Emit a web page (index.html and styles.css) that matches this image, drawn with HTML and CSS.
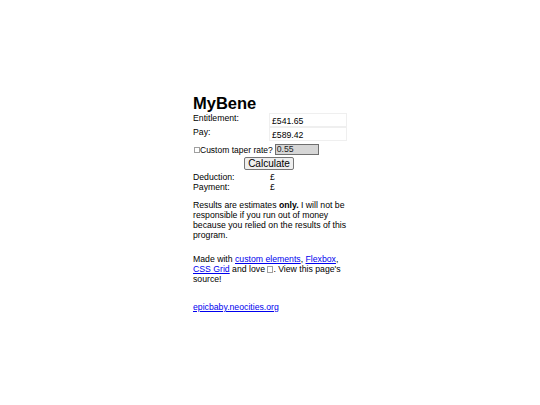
FILE: index.html
```html
<!DOCTYPE html>
<html lang="en">
<head>
<meta charset="utf-8">
<title>MyBene</title>
<link rel="stylesheet" href="styles.css">
</head>
<body>
<main class="page">
  <h1 class="title">MyBene</h1>
  <div class="grid">
    <div class="label">Entitlement:</div>
    <div class="value">£541.65</div>
    <div class="label">Pay:</div>
    <div class="value">£589.42</div>
  </div>
  <div class="taper">
    <span class="check"></span><span class="taper-text">Custom taper rate?</span><span class="rate">0.55</span>
  </div>
  <div class="actions"><button class="calc" type="button">Calculate</button></div>
  <div class="grid results">
    <div class="label">Deduction:</div>
    <div class="out">£</div>
    <div class="label">Payment:</div>
    <div class="out">£</div>
  </div>
  <p class="note">Results are estimates <b>only.</b> I will not be responsible if you run out of money because you relied on the results of this program.</p>
  <p class="made">Made with <a href="#">custom elements</a>, <a href="#">Flexbox</a>, <a href="#">CSS Grid</a> and love <span class="tofu"></span>. View this page's source!</p>
  <p class="site"><a href="#">epicbaby.neocities.org</a></p>
</main>
</body>
</html>
```
FILE: styles.css
```css
html, body {
  margin: 0;
  padding: 0;
  background: #ffffff;
}
body {
  font-family: "Liberation Sans", Arial, sans-serif;
  font-size: 8.7px;
  line-height: 10px;
  color: #000000;
}
.page {
  width: 154px;
  margin: 0 auto;
  padding-top: 95px;
}
.title {
  margin: 0;
  font-size: 16.5px;
  line-height: 17px;
  font-weight: bold;
}
.grid {
  display: grid;
  grid-template-columns: 76px 1fr;
  margin-top: 1px;
}
.label {
  line-height: 10px;
}
.value {
  border: 1px solid #efefef;
  padding: 2px 2px 0;
  line-height: 10px;
  height: 10px;
}
.taper {
  display: flex;
  align-items: center;
  margin-top: 3px;
  padding-left: 1px;
  height: 11px;
}
.check {
  display: inline-block;
  width: 4px;
  height: 4px;
  border: 1px solid #a0a0a0;
  margin-right: 0;
  margin-top: 1px;
}
.taper-text {
  font-size: 8.5px;
  margin-right: 2px;
}
.rate {
  display: inline-block;
  box-sizing: border-box;
  width: 44px;
  height: 11px;
  border: 1px solid #6f6f6f;
  background: #d6d6d6;
  padding-left: 1px;
  line-height: 9px;
  color: #222;
}
.actions {
  display: flex;
  justify-content: center;
  margin-top: 2px;
}
.calc {
  font-family: "Liberation Sans", Arial, sans-serif;
  font-size: 10px;
  line-height: 11px;
  padding: 0 3px;
  margin: 0 0 0 -2px;
  border: 1px solid #767676;
  border-radius: 2px;
  background: #efefef;
  color: #000;
}
.results {
  margin-top: 2px;
}
.out {
  padding-left: 1px;
}
.note {
  margin: 8px 0 0;
}
.made {
  margin: 14px 0 0;
}
.site {
  margin: 18px 0 0;
}
a {
  color: #0000ee;
  text-decoration: underline;
}
.tofu {
  display: inline-block;
  width: 4px;
  height: 5px;
  border: 1px solid #a0a0a0;
  vertical-align: -1px;
}
```
